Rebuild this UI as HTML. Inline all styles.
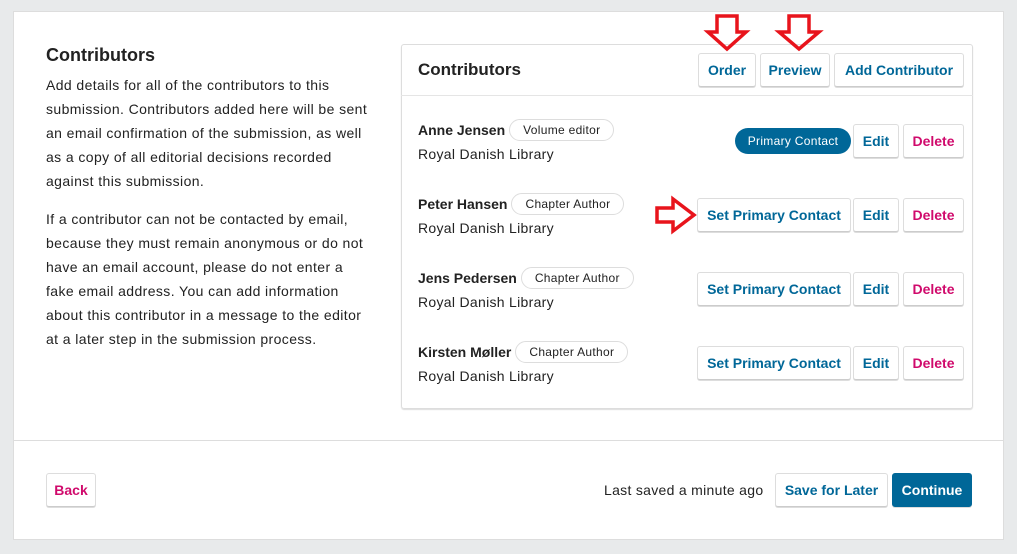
<!DOCTYPE html>
<html><head><meta charset="utf-8"><style>
*{box-sizing:border-box;margin:0;padding:0}
body{width:1017px;height:554px;background:#e8eaeb;font-family:"Liberation Sans","DejaVu Sans",sans-serif;color:#222;position:relative;overflow:hidden;font-size:14px}
.panel{position:absolute;left:13px;top:11px;width:991px;height:529px;background:#fff;border:1px solid #ddd}
.a{position:absolute}
.btn{position:absolute;height:34px;border:1px solid #ddd;border-bottom-color:#ccc;box-shadow:0 1px 0 #ddd;background:#fff;border-radius:3px;font-weight:bold;font-size:14px;color:#006798;display:flex;align-items:center;justify-content:center;white-space:nowrap}
.del{color:#d00a6c}
.tag{display:inline-block;border:1px solid #ddd;border-radius:14px;font-size:12px;font-weight:normal;padding:3px 13px;margin-left:4px;vertical-align:1px;letter-spacing:0.3px}
.name{font-weight:bold;font-size:14px}
p{line-height:24px;font-size:14px;letter-spacing:0.4px}
.aff{letter-spacing:0.3px}
</style></head><body>
<div class="panel"></div>
<div class="a" style="left:13px;top:440px;width:991px;border-top:1px solid #ddd"></div>
<div class="a" style="left:46px;top:45px;font-size:18px;font-weight:bold">Contributors</div>
<p class="a" style="left:46px;top:73px;width:360px">Add details for all of the contributors to this<br>submission. Contributors added here will be sent<br>an email confirmation of the submission, as well<br>as a copy of all editorial decisions recorded<br>against this submission.</p>
<p class="a" style="left:46px;top:207px;width:360px">If a contributor can not be contacted by email,<br>because they must remain anonymous or do not<br>have an email account, please do not enter a<br>fake email address. You can add information<br>about this contributor in a message to the editor<br>at a later step in the submission process.</p>
<div class="a" style="left:401px;top:44px;width:572px;height:365px;border:1px solid #ddd;border-radius:3px;box-shadow:0 1px 1px #ddd"></div>
<div class="a" style="left:401px;top:95px;width:572px;border-top:1px solid #e5e5e5"></div>
<div class="a" style="left:418px;top:60px;font-size:17px;font-weight:bold">Contributors</div>
<div class="btn" style="left:698px;top:53px;width:58px">Order</div>
<div class="btn" style="left:760px;top:53px;width:70px">Preview</div>
<div class="btn" style="left:834px;top:53px;width:130px">Add Contributor</div>

<div class="a" style="left:418px;top:119px"><span class="name">Anne Jensen</span><span class="tag">Volume editor</span></div>
<div class="a aff" style="left:418px;top:146px">Royal Danish Library</div>
<div class="a" style="left:735px;top:128px;width:116px;height:26px;border-radius:13px;background:#006798;color:#fff;font-size:12px;display:flex;align-items:center;justify-content:center;letter-spacing:0.3px">Primary Contact</div>
<div class="btn" style="left:853px;top:124px;width:46px">Edit</div>
<div class="btn del" style="left:903px;top:124px;width:61px">Delete</div>

<div class="a" style="left:418px;top:193px"><span class="name">Peter Hansen</span><span class="tag">Chapter Author</span></div>
<div class="a aff" style="left:418px;top:220px">Royal Danish Library</div>
<div class="btn" style="left:697px;top:198px;width:154px">Set Primary Contact</div>
<div class="btn" style="left:853px;top:198px;width:46px">Edit</div>
<div class="btn del" style="left:903px;top:198px;width:61px">Delete</div>

<div class="a" style="left:418px;top:267px"><span class="name">Jens Pedersen</span><span class="tag">Chapter Author</span></div>
<div class="a aff" style="left:418px;top:294px">Royal Danish Library</div>
<div class="btn" style="left:697px;top:272px;width:154px">Set Primary Contact</div>
<div class="btn" style="left:853px;top:272px;width:46px">Edit</div>
<div class="btn del" style="left:903px;top:272px;width:61px">Delete</div>

<div class="a" style="left:418px;top:341px"><span class="name">Kirsten Møller</span><span class="tag">Chapter Author</span></div>
<div class="a aff" style="left:418px;top:368px">Royal Danish Library</div>
<div class="btn" style="left:697px;top:346px;width:154px">Set Primary Contact</div>
<div class="btn" style="left:853px;top:346px;width:46px">Edit</div>
<div class="btn del" style="left:903px;top:346px;width:61px">Delete</div>

<svg class="a" style="left:0;top:0" width="1017" height="554">
<g fill="none" stroke="#e8141c" stroke-width="3.5" stroke-linejoin="miter">
<polygon points="717,16 737,16 737,32 746,32 727,49 708,32 717,32"/>
<polygon points="789,16 809,16 809,32 819,32 799,49 779,32 789,32"/>
<polygon points="657,208 673,208 673,199 694,215 673,231 673,222 657,222"/>
</g></svg>

<div class="btn del" style="left:46px;top:473px;width:50px">Back</div>
<div class="a" style="left:604px;top:482px;letter-spacing:0.3px">Last saved a minute ago</div>
<div class="btn" style="left:775px;top:473px;width:113px">Save for Later</div>
<div class="btn" style="left:892px;top:473px;width:80px;background:#006798;color:#fff;border-color:#006798">Continue</div>
</body></html>
